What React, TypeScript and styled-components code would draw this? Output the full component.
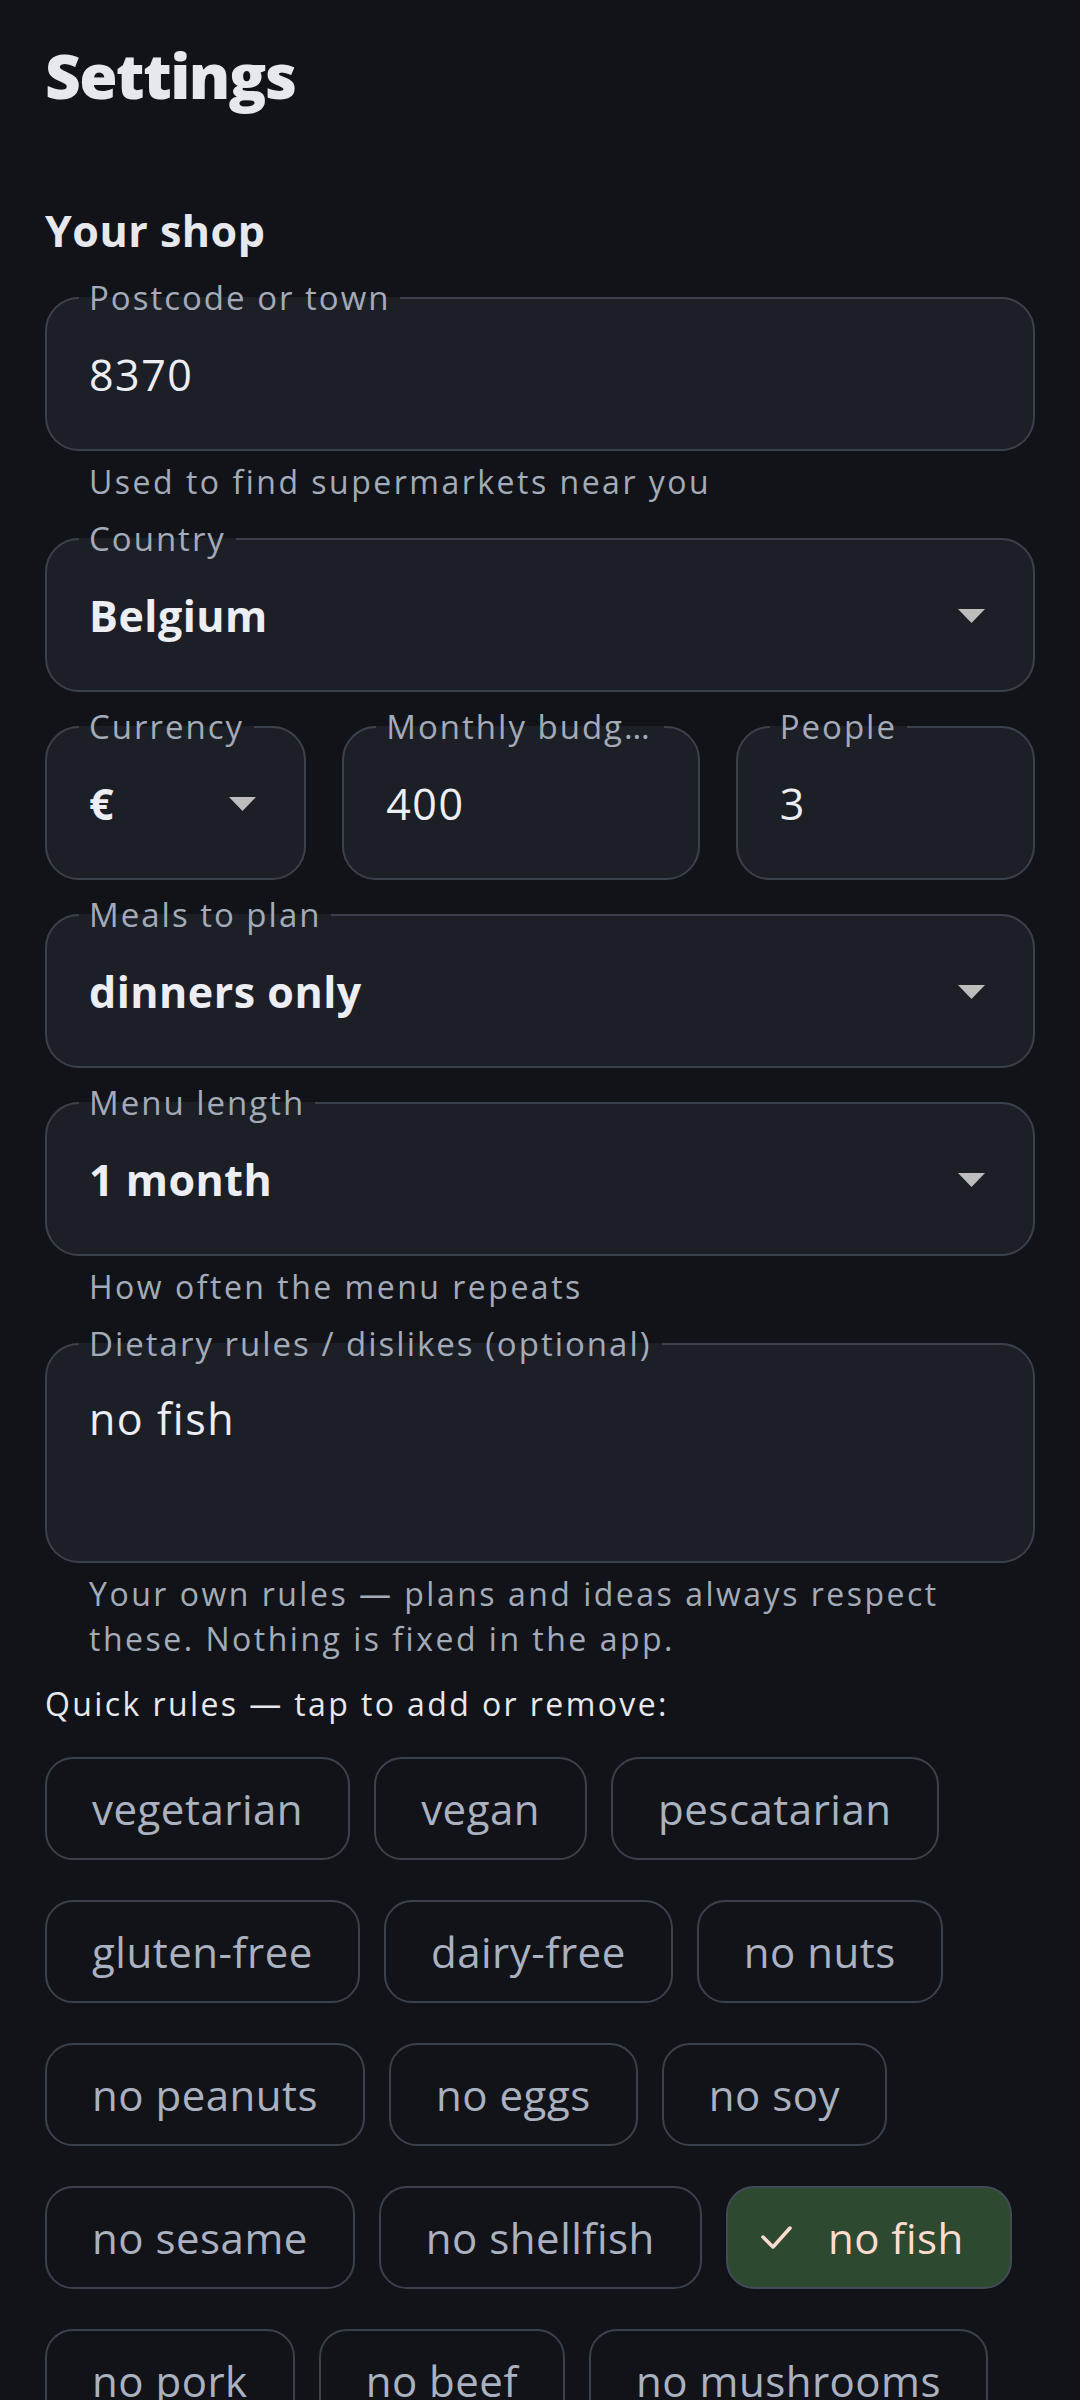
import React from 'react';
import styled, { createGlobalStyle } from 'styled-components';

const GlobalStyle = createGlobalStyle`
  html, body {
    margin: 0;
    padding: 0;
    background: #121318;
  }
  body {
    font-family: "Open Sans", "Noto Sans", sans-serif;
    color: #e6e8ee;
  }
  * {
    box-sizing: border-box;
  }
`;

const Page = styled.main`
  display: flex;
  flex-direction: column;
  padding: 38px 45px 80px;
`;

const Title = styled.h1`
  margin: 0;
  font-size: 62px;
  line-height: 74px;
  font-weight: 800;
  letter-spacing: -1.5px;
  color: #e6e8ee;
`;

const SectionTitle = styled.h2`
  margin: 93px 0 18px;
  font-size: 43px;
  line-height: 52px;
  font-weight: 700;
  letter-spacing: 0.5px;
  color: #e6e8ee;
`;

const Form = styled.div`
  display: flex;
  flex-direction: column;
  gap: 12px;
`;

const Field = styled.fieldset`
  margin: 0;
  min-width: 0;
  padding: 0 48px 20px 42px;
  border: 2px solid #3a414c;
  border-radius: 34px;
  background: #1d1f27;
`;

const Label = styled.legend`
  margin-left: -10px;
  padding: 0 10px;
  max-width: calc(100% + 24px);
  font-size: 33px;
  line-height: 46px;
  letter-spacing: 2px;
  color: #a3abb9;
  white-space: nowrap;
  overflow: hidden;
  text-overflow: ellipsis;
`;

const ValueRow = styled.div<{ $multiline?: boolean }>`
  display: flex;
  align-items: ${({ $multiline }) => ($multiline ? 'flex-start' : 'center')};
  justify-content: space-between;
  gap: 16px;
  height: ${({ $multiline }) => ($multiline ? '174px' : '108px')};
  padding-top: ${({ $multiline }) => ($multiline ? '22px' : '0')};
`;

const Value = styled.span<{ $bold?: boolean }>`
  font-size: 43px;
  line-height: 60px;
  font-weight: ${({ $bold }) => ($bold ? 700 : 400)};
  letter-spacing: ${({ $bold }) => ($bold ? '0.5px' : '1.5px')};
  color: #eceef3;
  white-space: nowrap;
`;

const Caret = styled.svg`
  flex: none;
  width: 27px;
  height: 14px;
  fill: #bdbdbd;
`;

const Helper = styled.p`
  margin: -4px 0 0;
  padding-left: 44px;
  font-size: 32px;
  line-height: 45px;
  letter-spacing: 2.5px;
  color: #a3abb9;
`;

const TripleRow = styled.div`
  display: grid;
  grid-template-columns: 261fr 357fr 299fr;
  gap: 36px;
`;

const QuickTitle = styled.p`
  margin: 8px 0 0;
  font-size: 32px;
  line-height: 45px;
  letter-spacing: 2.4px;
  color: #e6e8ee;
`;

const ChipList = styled.div`
  display: flex;
  flex-wrap: wrap;
  gap: 40px 24px;
  margin-top: 31px;
`;

const Chip = styled.button<{ $selected?: boolean }>`
  display: inline-flex;
  align-items: center;
  gap: 36px;
  height: 103px;
  padding: ${({ $selected }) => ($selected ? '0 46px 0 33px' : '0 45px')};
  border: 2px solid ${({ $selected }) => ($selected ? '#434a57' : '#3a414c')};
  border-radius: 28px;
  background: ${({ $selected }) => ($selected ? '#2d4a30' : 'transparent')};
  font-family: inherit;
  font-size: 42px;
  font-weight: 500;
  letter-spacing: 0.5px;
  color: ${({ $selected }) => ($selected ? '#ffdcd0' : '#aab1c0')};
  cursor: pointer;
`;

const Check = styled.svg`
  width: 31px;
  height: 23px;
  fill: none;
  stroke: #ffdcd0;
  stroke-width: 3.5;
  stroke-linecap: round;
  stroke-linejoin: round;
`;

const DownCaret = () => (
  <Caret viewBox="0 0 27 14">
    <polygon points="0,0 27,0 13.5,14" />
  </Caret>
);

type TextFieldProps = {
  label: string;
  value: string;
  select?: boolean;
  multiline?: boolean;
};

const TextField: React.FC<TextFieldProps> = ({ label, value, select, multiline }) => (
  <Field>
    <Label>{label}</Label>
    <ValueRow $multiline={multiline}>
      <Value $bold={select}>{value}</Value>
      {select && <DownCaret />}
    </ValueRow>
  </Field>
);

const quickRules = [
  'vegetarian',
  'vegan',
  'pescatarian',
  'gluten-free',
  'dairy-free',
  'no nuts',
  'no peanuts',
  'no eggs',
  'no soy',
  'no sesame',
  'no shellfish',
  'no fish',
  'no pork',
  'no beef',
  'no mushrooms',
];

const selectedRules = ['no fish'];

export default function App() {
  return (
    <>
      <GlobalStyle />
      <Page>
        <Title>Settings</Title>
        <SectionTitle>Your shop</SectionTitle>
        <Form>
          <TextField label="Postcode or town" value="8370" />
          <Helper>Used to find supermarkets near you</Helper>
          <TextField label="Country" value="Belgium" select />
          <TripleRow>
            <TextField label="Currency" value="€" select />
            <TextField label="Monthly budget" value="400" />
            <TextField label="People" value="3" />
          </TripleRow>
          <TextField label="Meals to plan" value="dinners only" select />
          <TextField label="Menu length" value="1 month" select />
          <Helper>How often the menu repeats</Helper>
          <TextField label="Dietary rules / dislikes (optional)" value="no fish" multiline />
          <Helper>Your own rules — plans and ideas always respect these. Nothing is fixed in the app.</Helper>
          <QuickTitle>Quick rules — tap to add or remove:</QuickTitle>
        </Form>
        <ChipList>
          {quickRules.map((rule) => {
            const selected = selectedRules.includes(rule);
            return (
              <Chip key={rule} $selected={selected}>
                {selected && (
                  <Check viewBox="0 0 31 23">
                    <polyline points="2,11 12,21 29,2" />
                  </Check>
                )}
                {rule}
              </Chip>
            );
          })}
        </ChipList>
      </Page>
    </>
  );
}
